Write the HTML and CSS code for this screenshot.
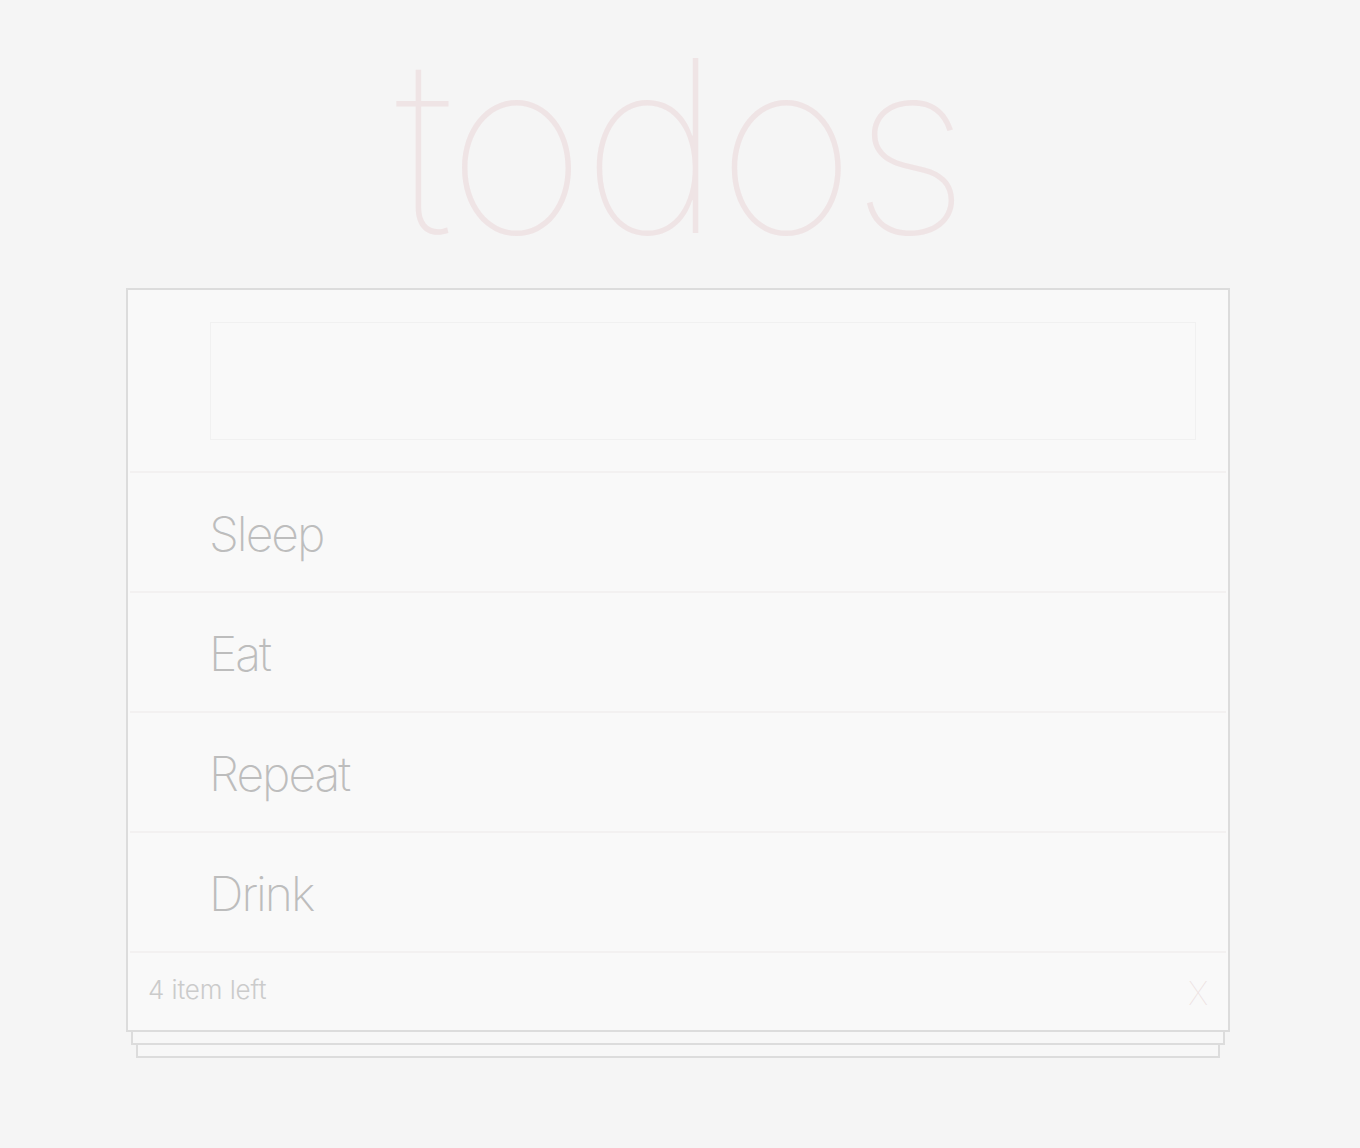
FILE: index.html
```html
<!DOCTYPE html>
<html lang="en">
<head>
<meta charset="utf-8">
<title>todos</title>
<link rel="stylesheet" href="styles.css">
</head>
<body>
<section class="app">
  <h1 class="title">todos</h1>
  <div class="card">
    <div class="card-head">
      <input class="new-todo" type="text" aria-label="New todo">
    </div>
    <ul class="todo-list">
      <li class="todo">Sleep</li>
      <li class="todo">Eat</li>
      <li class="todo">Repeat</li>
      <li class="todo">Drink</li>
    </ul>
    <footer class="card-foot">
      <span class="count">4 item left</span>
      <span class="clear">X</span>
    </footer>
  </div>
  <div class="sheet sheet-1"></div>
  <div class="sheet sheet-2"></div>
</section>
</body>
</html>
```
FILE: styles.css
```css
html, body {
  margin: 0;
  padding: 0;
  background: #f5f5f5;
  font-family: Inter, "Noto Sans", sans-serif;
}
.app {
  width: 1104px;
  margin-left: 126px;
  padding-top: 6px;
}
.title {
  margin: 0;
  height: 282px;
  text-align: center;
  font-weight: 100;
  font-size: 241px;
  line-height: 280px;
  color: #efe4e5;
  letter-spacing: -5px;
  padding-left: 4px;
  box-sizing: border-box;
}
.card {
  border: 2px solid #dcdcdc;
  background: #f9f9f9;
}
.card-head {
  padding: 32px 32px 31px 82px;
}
.new-todo {
  display: block;
  box-sizing: border-box;
  width: 100%;
  height: 118px;
  margin: 0;
  border: 1px solid #f1f1f1;
  background: #f9f9f9;
  outline: none;
}
.todo-list {
  list-style: none;
  margin: 0;
  padding: 0 2px;
}
.todo {
  border-top: 2px solid #f3f1f1;
  height: 118px;
  padding-left: 79px;
  font-size: 48px;
  font-weight: 200;
  line-height: 122px;
  color: #bdbdbd;
  letter-spacing: -2px;
}
.card-foot {
  margin: 0 2px;
  border-top: 2px solid #f3f1f1;
  height: 77px;
  display: flex;
  align-items: center;
  justify-content: space-between;
  padding: 0 18px 0 18px;
}
.count {
  font-size: 26px;
  font-weight: 300;
  color: #cbcbcb;
  letter-spacing: -0.1px;
  margin-top: -4px;
}
.clear {
  font-size: 32px;
  font-weight: 100;
  color: #ecdfe0;
  margin-top: 4px;
}
.sheet {
  border: 2px solid #dcdcdc;
  border-top: none;
  background: #f7f7f7;
  height: 11px;
}
.sheet-1 {
  margin: 0 5px;
}
.sheet-2 {
  margin: 0 10px;
}
```
